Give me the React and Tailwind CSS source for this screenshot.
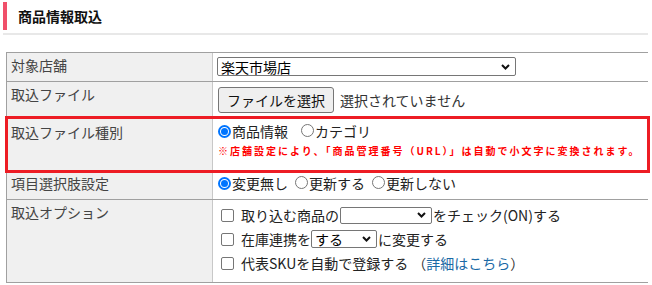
import React from 'react';

function Chevron() {
  return (
    <svg width="9" height="6" viewBox="0 0 9 6" className="shrink-0">
      <path d="M1 1 L4.5 4.5 L8 1" fill="none" stroke="#111" strokeWidth="2" />
    </svg>
  );
}

function Radio({ checked }) {
  if (checked) {
    return (
      <span className="inline-flex w-[13px] h-[13px] shrink-0 items-center justify-center rounded-full border-2 border-[#0075ff] bg-white">
        <span className="w-[7px] h-[7px] rounded-full bg-[#0075ff]" />
      </span>
    );
  }
  return <span className="inline-block w-[13px] h-[13px] shrink-0 rounded-full border border-[#767676] bg-white" />;
}

function Check() {
  return <span className="inline-block w-[13px] h-[13px] shrink-0 rounded-[2px] border border-[#767676] bg-white" />;
}

function Row({ label, className, labelClass, children }) {
  return (
    <div className={'grid grid-cols-[206px_1fr] border-b border-[#a0a0a0] ' + className}>
      <div className={'bg-[#f0f0f0] border-r border-[#c8c8c8] pl-[4px] leading-[18px] text-[#444] ' + labelClass}>
        {label}
      </div>
      <div className="bg-white">{children}</div>
    </div>
  );
}

export default function App() {
  return (
    <div className="w-[652px] h-[285px] overflow-hidden bg-white text-[14px] text-[#222] font-['Noto_Sans_CJK_JP',sans-serif]">
      {/* ── HEADER ── */}
      <div className="flex items-center h-[30px] pt-[2px] pl-[3px]">
        <div className="w-[4px] h-[28px] bg-[#f0506a]" />
        <h1 className="ml-[11px] text-[14px] font-bold leading-none text-[#111]">商品情報取込</h1>
      </div>
      <div className="mt-[3px] ml-[3px] mr-[4px] h-[2px] bg-[#e8e8e8]" />

      {/* ── FORM TABLE ── */}
      <div className="mt-[17px] ml-[6px] mr-[4px] border-l border-t border-[#a0a0a0]">
        <Row label="対象店舗" className="h-[29px]" labelClass="pt-[3px]">
          <div className="pt-[4px] pl-[4px]">
            <div className="flex items-center justify-between w-[299px] h-[19px] pl-[3px] pr-[5px] border border-[#767676] rounded-[2px] leading-none text-black">
              <span>楽天市場店</span>
              <Chevron />
            </div>
          </div>
        </Row>

        <Row label="取込ファイル" className="h-[36px]" labelClass="pt-[3px]">
          <div className="flex items-center pt-[5px] pl-[5px]">
            <span className="inline-flex items-center h-[26px] px-[8px] border border-[#767676] rounded-[3px] bg-[#efefef] leading-none text-[#111]">
              ファイルを選択
            </span>
            <span className="ml-[6px] text-[#333]">選択されていません</span>
          </div>
        </Row>

        <Row
          label="取込ファイル種別"
          className="h-[53px] relative z-10 outline-[3px] outline-[#ed1c24] outline-offset-[-1px]"
          labelClass="pt-[5px]"
        >
          <div className="pt-[4px] pl-[5px]">
            <div className="flex items-center h-[18px] leading-[18px]">
              <Radio checked />
              <span className="ml-[1px]">商品情報</span>
              <span className="ml-[13px]"><Radio /></span>
              <span className="ml-[1px]">カテゴリ</span>
            </div>
            <p className="mt-[4px] text-[10px] leading-[14px] tracking-[2px] font-semibold text-[#ff0000] whitespace-nowrap">
              ※店舗設定により、「商品管理番号（URL）」は自動で小文字に変換されます。
            </p>
          </div>
        </Row>

        <Row label="項目選択肢設定" className="h-[29px]" labelClass="pt-[3px]">
          <div className="flex items-center h-[18px] leading-[18px] mt-[3px] pl-[5px]">
            <Radio checked />
            <span className="ml-[1px]">変更無し</span>
            <span className="ml-[7px]"><Radio /></span>
            <span className="ml-[1px]">更新する</span>
            <span className="ml-[7px]"><Radio /></span>
            <span className="ml-[1px]">更新しない</span>
          </div>
        </Row>

        <Row label="取込オプション" className="h-[83px]" labelClass="pt-[3px]">
          <div className="pt-[3px] pl-[8px] leading-[24px]">
            <div className="flex items-center h-[24px]">
              <Check />
              <span className="ml-[7px]">取り込む商品の</span>
              <span className="ml-[1px] flex items-center justify-end w-[92px] h-[17px] pr-[5px] border border-[#767676] rounded-[2px]">
                <Chevron />
              </span>
              <span className="ml-[1px]">をチェック(ON)する</span>
            </div>
            <div className="flex items-center h-[24px]">
              <Check />
              <span className="ml-[7px]">在庫連携を</span>
              <span className="flex items-center justify-between w-[66px] h-[18px] pl-[3px] pr-[5px] border border-[#767676] rounded-[2px] leading-none text-black">
                <span>する</span>
                <Chevron />
              </span>
              <span className="ml-[1px]">に変更する</span>
            </div>
            <div className="flex items-center h-[24px]">
              <Check />
              <span className="ml-[7px]">代表SKUを自動で登録する</span>
              <span className="ml-[4px] text-[#333]">
                （<span className="text-[#1a6aa6]">詳細はこちら</span>）
              </span>
            </div>
          </div>
        </Row>
      </div>
    </div>
  );
}
